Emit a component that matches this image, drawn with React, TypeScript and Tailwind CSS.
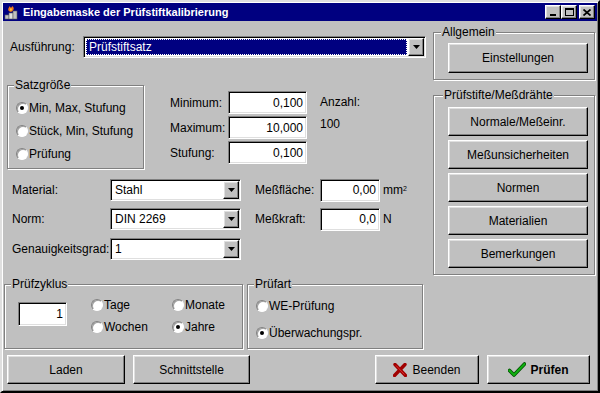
import React from 'react';

const font = "font-['Liberation_Sans',Arial,sans-serif]";

const raised =
  'border border-t-white border-l-white border-b-black border-r-black bg-[#c0c0c0] shadow-[inset_-1px_-1px_0_#808080,inset_1px_1px_0_#dfdfdf]';

const sunken =
  'border border-t-[#808080] border-l-[#808080] border-b-white border-r-white shadow-[inset_1px_1px_0_#000,inset_-1px_-1px_0_#dfdfdf]';

function Btn({ className = '', children }: { className?: string; children: React.ReactNode }) {
  return <div className={`flex items-center justify-center ${raised} ${className}`}>{children}</div>;
}

function Edit({ value, className = '' }: { value: string; className?: string }) {
  return (
    <div className={`flex items-center justify-end bg-white pr-[3px] ${sunken} ${className}`}>
      {value}
    </div>
  );
}

function Arrow() {
  return (
    <Btn className="h-[18px] w-[16px] shrink-0">
      <svg width="7" height="4" viewBox="0 0 7 4">
        <polygon points="0,0 7,0 3.5,4" fill="#000" />
      </svg>
    </Btn>
  );
}

function Combo({ value, className = '', selected }: { value: string; className?: string; selected?: boolean }) {
  return (
    <div className={`flex h-[22px] items-center bg-white p-[1px] ${sunken} ${className}`}>
      {selected ? (
        <div className="mx-[1px] flex h-[16px] flex-1 items-center border border-dotted border-white bg-[#000080] pl-[2px] text-white">
          {value}
        </div>
      ) : (
        <div className="flex-1 pl-[3px]">{value}</div>
      )}
      <Arrow />
    </div>
  );
}

function Radio({ label, checked, className = '' }: { label: string; checked?: boolean; className?: string }) {
  return (
    <div className={`flex items-center ${className}`}>
      <span className="mr-[1px] flex h-[12px] w-[12px] shrink-0 items-center justify-center rounded-full border border-t-[#808080] border-l-[#808080] border-b-white border-r-white bg-white shadow-[inset_1px_1px_0_#a0a0a0]">
        {checked && <span className="h-[4px] w-[4px] rounded-full bg-black" />}
      </span>
      <span>{label}</span>
    </div>
  );
}

function Group({
  label,
  className = '',
  legendCls = 'left-[6px]',
  children,
}: {
  label: string;
  className?: string;
  legendCls?: string;
  children?: React.ReactNode;
}) {
  return (
    <div
      className={`relative border border-[#808080] shadow-[inset_1px_1px_0_#fff,1px_1px_0_#fff] ${className}`}
    >
      <span className={`absolute -top-[8px] bg-[#c0c0c0] px-[1px] leading-[14px] ${legendCls}`}>{label}</span>
      {children}
    </div>
  );
}

function TitleIcon() {
  return (
    <svg width="16" height="16" viewBox="0 0 16 16">
      <rect x="1" y="11" width="4" height="4" fill="#c0c0c0" stroke="#606060" strokeWidth="0.6" />
      <rect x="5" y="9" width="4" height="6" fill="#e0e0e0" stroke="#606060" strokeWidth="0.6" />
      <rect x="9" y="7" width="4" height="8" fill="#c0c0c0" stroke="#606060" strokeWidth="0.6" />
      <path d="M7 8 C3 7 4 4 6 2 C6 4 8 4 8 2 C10 3 11 6 7 8 Z" fill="#f07818" />
      <path d="M7 7 C5.5 6 6 5 7 4 C7.5 5 8.5 5.5 7 7 Z" fill="#ffd040" />
    </svg>
  );
}

export default function App() {
  return (
    <div
      className={`${font} flex h-[393px] w-[600px] flex-col border-2 border-t-[#dfdfdf] border-l-[#dfdfdf] border-b-black border-r-black bg-[#c0c0c0] p-[1px] text-[12px] leading-[14px] text-black shadow-[inset_1px_1px_0_#fff,inset_-1px_-1px_0_#808080]`}
    >
      {/* Title bar */}
      <div className="flex h-[18px] shrink-0 items-center bg-[#000080] pl-[1px] pr-[2px]">
        <TitleIcon />
        <span className="ml-[3px] text-[11px] font-bold text-white">Eingabemaske der Prüfstiftkalibrierung</span>
        <div className="ml-auto flex items-center">
          <Btn className="h-[14px] w-[16px] items-end pb-[2px]">
            <span className="h-[2px] w-[6px] bg-black" />
          </Btn>
          <Btn className="h-[14px] w-[16px]">
            <span className="h-[8px] w-[9px] border border-t-2 border-black" />
          </Btn>
          <Btn className="ml-[2px] h-[14px] w-[16px]">
            <svg width="8" height="7" viewBox="0 0 8 7">
              <path d="M0.5 0.5 L7.5 6.5 M7.5 0.5 L0.5 6.5" stroke="#000" strokeWidth="1.7" />
            </svg>
          </Btn>
        </div>
      </div>

      <div className="flex">
        {/* Left column */}
        <div className="ml-[1px] flex w-[423px] flex-col">
          <div className="mt-[15px] flex h-[22px] items-center">
            <span className="w-[79px] pl-[6px]">Ausführung:</span>
            <Combo value="Prüfstiftsatz" selected className="w-[343px]" />
          </div>

          <div className="mt-[27px] flex items-start">
            <Group label="Satzgröße" className="ml-[3px] h-[84px] w-[137px]">
              <div className="flex flex-col pl-[8px] pt-[10px]">
                <Radio label="Min, Max, Stufung" checked className="h-[23px]" />
                <Radio label="Stück, Min, Stufung" className="h-[23px]" />
                <Radio label="Prüfung" className="h-[23px]" />
              </div>
            </Group>
            <div className="ml-[26px] mt-[6px] flex flex-col gap-[2px]">
              {[
                ['Minimum:', '0,100'],
                ['Maximum:', '10,000'],
                ['Stufung:', '0,100'],
              ].map(([l, v]) => (
                <div key={l} className="flex h-[23px] items-center">
                  <span className="w-[58px]">{l}</span>
                  <Edit value={v} className="h-[23px] w-[79px]" />
                </div>
              ))}
            </div>
            <div className="ml-[13px] mt-[10px] flex flex-col gap-[8px]">
              <span>Anzahl:</span>
              <span>100</span>
            </div>
          </div>

          <div className="mt-[10px] flex h-[22px] items-center">
            <span className="w-[106px] pl-[8px]">Material:</span>
            <Combo value="Stahl" className="w-[131px]" />
            <span className="ml-[14px] w-[65px]">Meßfläche:</span>
            <Edit value="0,00" className="h-[23px] w-[60px]" />
            <span className="ml-[3px]">
              mm<sup className="text-[7px]">2</sup>
            </span>
          </div>
          <div className="mt-[7px] flex h-[22px] items-center">
            <span className="w-[106px] pl-[8px]">Norm:</span>
            <Combo value="DIN 2269" className="w-[131px]" />
            <span className="ml-[14px] w-[65px]">Meßkraft:</span>
            <Edit value="0,0" className="h-[23px] w-[60px]" />
            <span className="ml-[3px]">N</span>
          </div>
          <div className="mt-[8px] flex h-[22px] items-center">
            <span className="w-[106px] pl-[8px]">Genauigkeitsgrad:</span>
            <Combo value="1" className="w-[131px]" />
          </div>

          <div className="mt-[24px] flex">
            <Group label="Prüfzyklus" className="flex h-[65px] w-[239px] items-start">
              <Edit value="1" className="ml-[13px] mt-[17px] h-[24px] w-[49px]" />
              <div className="ml-[24px] mt-[12px] grid grid-cols-[81px_auto] gap-y-[6px]">
                <Radio label="Tage" className="h-[16px]" />
                <Radio label="Monate" className="h-[16px]" />
                <Radio label="Wochen" className="h-[16px]" />
                <Radio label="Jahre" checked className="h-[16px]" />
              </div>
            </Group>
            <Group label="Prüfart" className="ml-[4px] h-[65px] w-[176px]">
              <div className="flex flex-col gap-[11px] pl-[8px] pt-[13px]">
                <Radio label="WE-Prüfung" className="h-[16px]" />
                <Radio label="Überwachungspr." checked className="h-[16px]" />
              </div>
            </Group>
          </div>
        </div>

        {/* Right column */}
        <div className="ml-[6px] flex w-[162px] flex-col">
          <Group label="Allgemein" className="mt-[11px] h-[48px]" legendCls="left-[7px]">
            <Btn className="ml-[14px] mt-[10px] h-[30px] w-[140px]">Einstellungen</Btn>
          </Group>
          <Group label="Prüfstifte/Meßdrähte" className="mt-[15px] h-[180px]" legendCls="left-[9px]">
            <div className="ml-[14px] mt-[11px] flex flex-col gap-[4px]">
              {['Normale/Meßeinr.', 'Meßunsicherheiten', 'Normen', 'Materialien', 'Bemerkungen'].map((t) => (
                <Btn key={t} className="h-[29px] w-[140px]">
                  {t}
                </Btn>
              ))}
            </div>
          </Group>
        </div>
      </div>

      {/* Bottom buttons */}
      <div className="mt-[6px] flex h-[29px]">
        <Btn className="ml-[4px] w-[118px]">Laden</Btn>
        <Btn className="ml-[8px] w-[117px]">Schnittstelle</Btn>
        <Btn className="ml-[125px] w-[104px] gap-[5px]">
          <svg width="14" height="14" viewBox="0 0 14 14">
            <path d="M2 1.5 L12.5 12.5 M12 1.5 L1.5 12.5" stroke="#a00000" strokeWidth="3.4" strokeLinecap="round" />
            <path d="M3 2.5 L11.5 11.5" stroke="#e03030" strokeWidth="1" />
          </svg>
          <span>Beenden</span>
        </Btn>
        <Btn className="ml-[8px] w-[103px] gap-[4px]">
          <svg width="18" height="15" viewBox="0 0 18 15">
            <path d="M1.5 8.5 L6 13 L16.5 2" fill="none" stroke="#005000" strokeWidth="3.6" strokeLinecap="round" strokeLinejoin="round" />
            <path d="M1.5 8.5 L6 13 L16.5 2" fill="none" stroke="#10b010" strokeWidth="2" strokeLinecap="round" strokeLinejoin="round" />
          </svg>
          <span className="font-bold">Prüfen</span>
        </Btn>
      </div>
    </div>
  );
}
